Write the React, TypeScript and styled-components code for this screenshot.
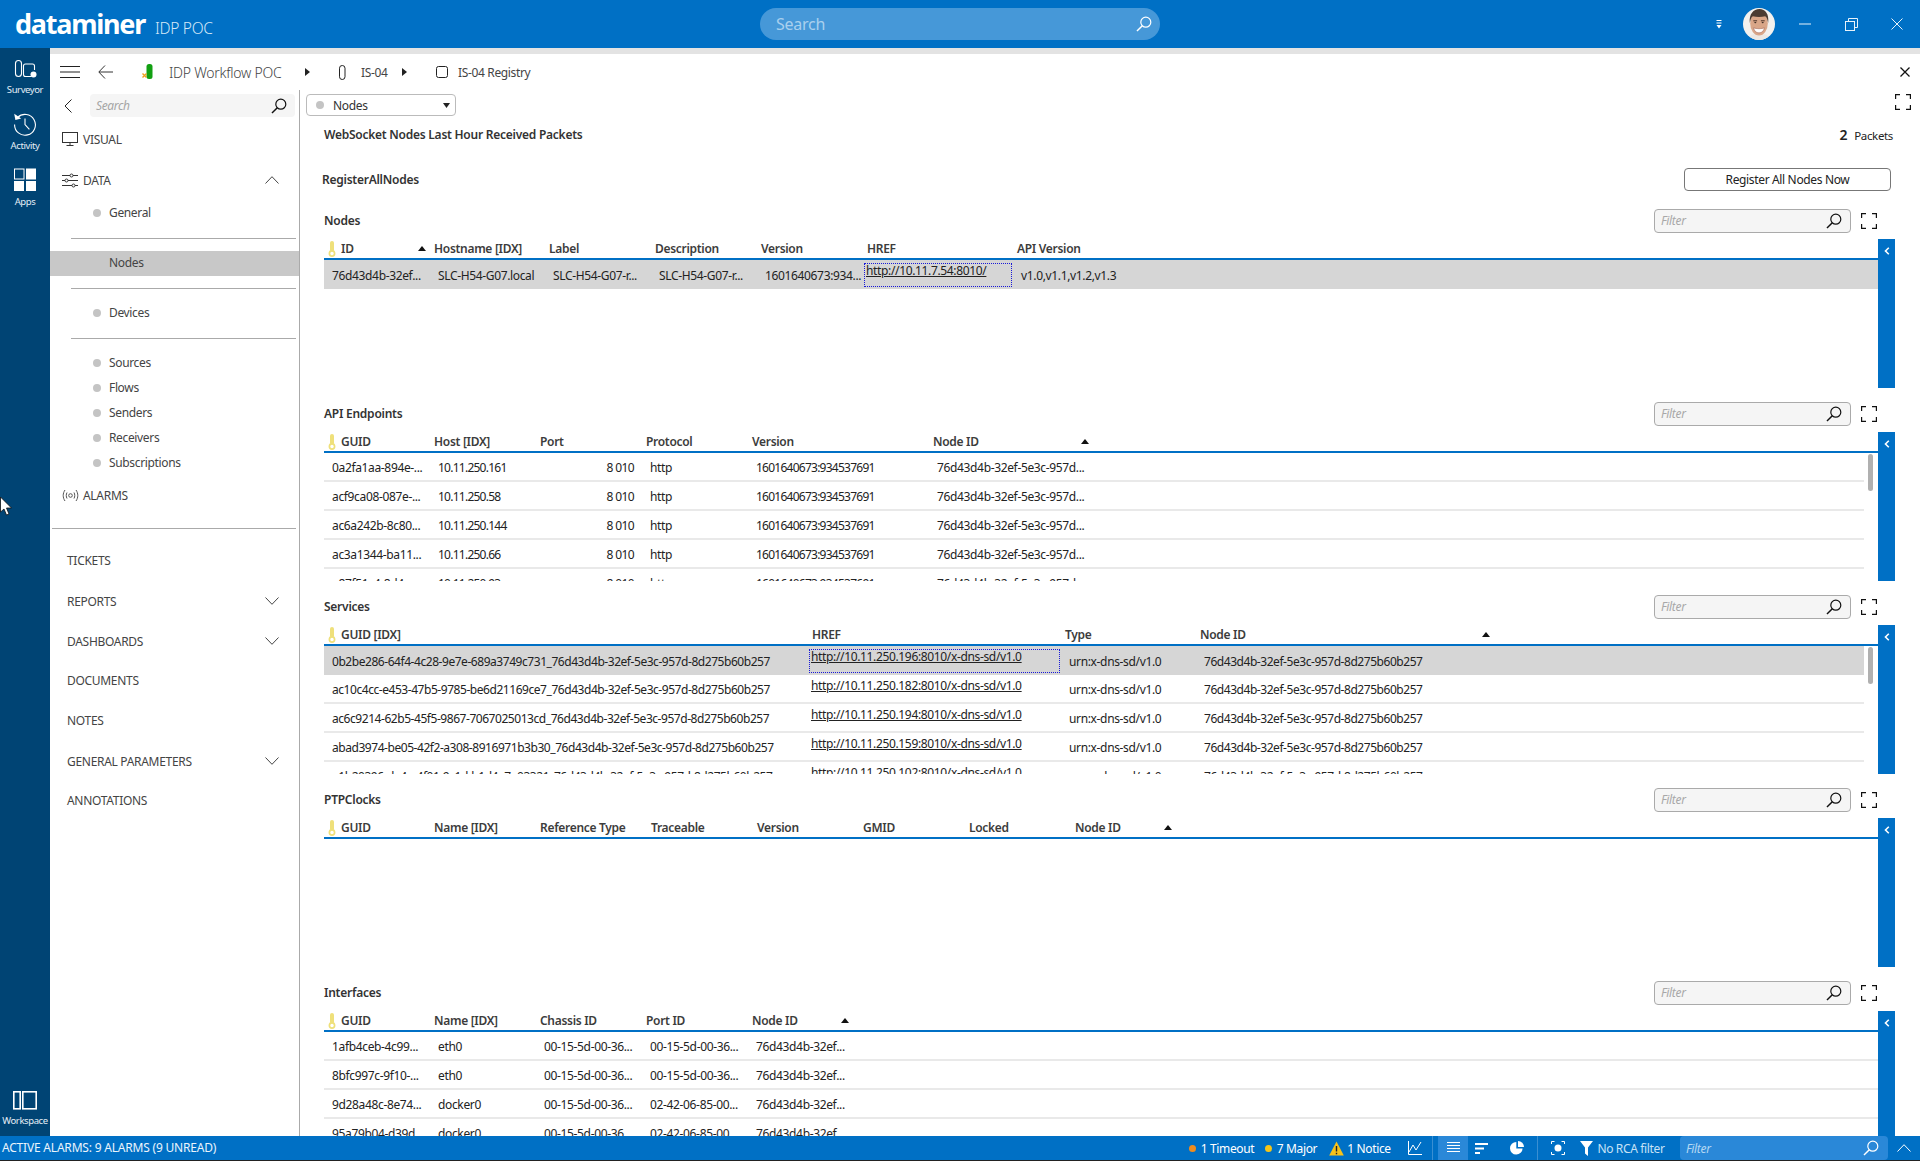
import React from "react";
import styled, { createGlobalStyle } from "styled-components";

const FONT = `"Noto Sans", "Open Sans", "DejaVu Sans", sans-serif`;
const BLUE = "#0070c5";

const Global = createGlobalStyle`
  html, body { margin: 0; padding: 0; background: #fff; }
  * { box-sizing: border-box; }
  svg { flex: none; }
  body { font-family: ${FONT}; font-size: 12px; letter-spacing: -0.35px; color: #222; }
`;

const Page = styled.div`
  position: relative;
  width: 1920px;
  height: 1161px;
  overflow: hidden;
  display: flex;
  flex-direction: column;
  background: #fff;
`;

/* ---------- top bar ---------- */
const TopBar = styled.header`
  flex: none;
  height: 48px;
  background: ${BLUE};
  display: grid;
  grid-template-columns: 760px 400px 1fr;
  align-items: center;
  color: #fff;
`;
const Brand = styled.div`
  display: flex;
  align-items: baseline;
  padding-left: 15px;
`;
const Logo = styled.span`
  font-size: 27px;
  font-weight: 700;
  letter-spacing: -1.25px;
  line-height: 36px;
`;
const Tag = styled.span`
  font-size: 15.5px;
  font-weight: 300;
  letter-spacing: -0.3px;
  margin-left: 10px;
  color: #d5e8f7;
`;
const GlobalSearch = styled.div`
  height: 32px;
  border-radius: 16px;
  background: #4698d8;
  display: flex;
  align-items: center;
  justify-content: space-between;
  padding: 0 8px 0 16px;
  font-size: 16px;
  letter-spacing: -0.25px;
  color: #a9d0ee;
`;
const TopRight = styled.div`
  display: flex;
  align-items: center;
  justify-content: flex-end;
  height: 48px;
`;
const Avatar = styled.svg`
  width: 32px;
  height: 32px;
  margin: 0 7px 0 19px;
`;
const WinButton = styled.span`
  width: 46px;
  height: 48px;
  display: flex;
  align-items: center;
  justify-content: center;
`;

/* ---------- body ---------- */
const Body = styled.div`
  flex: 1;
  min-height: 0;
  display: flex;
`;
const Rail = styled.nav`
  flex: none;
  width: 50px;
  background: #004474;
  display: flex;
  flex-direction: column;
  color: #e4eef6;
`;
const RailButton = styled.div<{ $bottom?: boolean }>`
  height: 55px;
  padding-top: 10px;
  display: flex;
  flex-direction: column;
  align-items: center;
  margin-top: ${(p) => (p.$bottom ? "auto" : "0")};
  margin-bottom: ${(p) => (p.$bottom ? "4px" : "0")};
`;
const RailLabel = styled.span`
  font-size: 9.5px;
  line-height: 14px;
  margin-top: 3px;
  letter-spacing: -0.4px;
`;
const Work = styled.div`
  flex: 1;
  min-width: 0;
  display: flex;
  flex-direction: column;
  border-top: 6px solid #e3e3e3;
`;
const CrumbBar = styled.div`
  flex: none;
  height: 36px;
  display: flex;
  align-items: center;
  padding-right: 10px;
`;
const CrumbSlot = styled.span<{ $left: number; $width: number }>`
  flex: none;
  margin-left: ${(p) => p.$left}px;
  width: ${(p) => p.$width}px;
  display: flex;
  align-items: center;
  white-space: nowrap;
  color: #444;
`;
const CrumbTitle = styled(CrumbSlot)`
  font-size: 14px;
  font-weight: 300;
  letter-spacing: -0.25px;
`;
const CrumbClose = styled.span`
  margin-left: auto;
  display: flex;
`;
const Columns = styled.div`
  flex: 1;
  min-height: 0;
  display: flex;
`;

/* ---------- side navigation ---------- */
const NavPanel = styled.aside`
  flex: none;
  width: 250px;
  border-right: 1px solid #aaa;
  color: #444;
`;
const NavSearchRow = styled.div`
  height: 30px;
  display: flex;
  align-items: flex-start;
  padding-top: 4px;
`;
const NavBack = styled.span`
  width: 40px;
  height: 23px;
  display: flex;
  align-items: center;
  padding-left: 14px;
`;
const NavSearch = styled.div`
  width: 205px;
  height: 23px;
  border-radius: 4px;
  background: #f5f5f5;
  display: flex;
  align-items: center;
  justify-content: space-between;
  padding: 0 8px 0 6px;
  font-style: italic;
  color: #a5a5a5;
`;
const NavTop = styled.div<{ $gap?: number }>`
  height: 40px;
  margin-top: ${(p) => p.$gap ?? 0}px;
  display: flex;
  align-items: center;
  padding: 0 20px 2px 12px;
  font-size: 12px;
  letter-spacing: -0.3px;
`;
const NavIcon = styled.span`
  width: 21px;
  display: flex;
  flex: none;
`;
const NavChevron = styled.span`
  margin-left: auto;
  display: flex;
`;
const NavSub = styled.div<{ $active?: boolean }>`
  height: 25px;
  display: flex;
  align-items: center;
  padding: 0 0 2px 43px;
  background: ${(p) => (p.$active ? "#c8c8c8" : "transparent")};
`;
const NavDot = styled.span<{ $hidden?: boolean }>`
  width: 8px;
  height: 8px;
  border-radius: 50%;
  background: ${(p) => (p.$hidden ? "transparent" : "#c4c4c4")};
  margin-right: 8px;
`;
const NavRule = styled.div<{ $left: number }>`
  height: 1px;
  margin: 12px 3px 12px ${(p) => p.$left}px;
  background: #aaa;
`;
const NavPlain = styled(NavTop)`
  padding-left: 17px;
`;

/* ---------- main ---------- */
const Main = styled.main`
  flex: 1;
  min-width: 0;
  overflow: hidden;
`;
const TopRow = styled.div`
  height: 33px;
  padding: 4px 9px 0 6px;
  display: flex;
  justify-content: space-between;
  align-items: flex-start;
`;
const Dropdown = styled.div`
  width: 150px;
  height: 22px;
  border: 1px solid #bbb;
  border-radius: 4px;
  display: flex;
  align-items: center;
  padding: 0 5px 0 9px;
  color: #333;
`;
const DropText = styled.span`
  margin-left: 1px;
  flex: 1;
`;
const TitleRow = styled.div`
  height: 24px;
  padding: 0 27px 2px 24px;
  display: flex;
  justify-content: space-between;
  align-items: center;
`;
const StrongTitle = styled.span`
  font-weight: 600;
  color: #333;
  letter-spacing: -0.25px;
`;
const Packets = styled.span`
  display: flex;
  align-items: baseline;
  gap: 7px;
  font-size: 11.5px;
  b { font-size: 14px; font-weight: 600; }
`;
const RegisterRow = styled.div`
  margin-top: 21px;
  height: 23px;
  padding: 0 29px 0 22px;
  display: flex;
  justify-content: space-between;
  align-items: center;
`;
const RegisterButton = styled.button`
  width: 207px;
  height: 23px;
  border: 1px solid #777;
  border-radius: 4px;
  background: #fff;
  font: inherit;
  letter-spacing: inherit;
  color: #222;
  padding: 0;
`;
const Sections = styled.div`
  margin-top: 17px;
`;
const Section = styled.section`
  height: 193px;
  padding: 0 25px 0 24px;
`;
const SectionHead = styled.div`
  height: 25px;
  margin-bottom: 6px;
  display: flex;
  align-items: center;
  padding-right: 18px;
`;
const FilterBox = styled.div`
  margin-left: auto;
  width: 197px;
  height: 24px;
  border: 1px solid #aaa;
  border-radius: 4px;
  background: #f5f5f5;
  display: flex;
  align-items: center;
  justify-content: space-between;
  padding: 0 8px 0 6px;
  font-style: italic;
  color: #a8a8a8;
`;
const ExpandIcon = styled.span`
  margin-left: 10px;
  display: flex;
`;
const TableWrap = styled.div`
  height: 149px;
  display: flex;
`;
const TableMain = styled.div`
  flex: 1;
  min-width: 0;
  display: flex;
  flex-direction: column;
`;
const SideTab = styled.div`
  flex: none;
  width: 17px;
  background: ${BLUE};
  display: flex;
  justify-content: center;
  padding-top: 8px;
`;
const HeadRow = styled.div<{ $cols: string }>`
  flex: none;
  height: 21px;
  display: grid;
  grid-template-columns: ${(p) => p.$cols};
  border-bottom: 2px solid ${BLUE};
  font-weight: 600;
  color: #3c3c3c;
  letter-spacing: -0.3px;
`;
const HeadCell = styled.div`
  display: flex;
  align-items: center;
  white-space: nowrap;
  padding-right: 8px;
`;
const KeyIcon = styled.svg`
  flex: none;
  margin: 0 5px 0 4px;
`;
const SortMark = styled.span`
  margin-left: auto;
  width: 0;
  height: 0;
  border-left: 4.5px solid transparent;
  border-right: 4.5px solid transparent;
  border-bottom: 5px solid #111;
`;
const BodyArea = styled.div`
  flex: 1;
  min-height: 0;
  display: flex;
  overflow: hidden;
`;
const RowList = styled.div`
  flex: 1;
  min-width: 0;
`;
const ScrollTrack = styled.div`
  flex: none;
  width: 14px;
  padding: 1px 5px 0 4px;
`;
const ScrollThumb = styled.div`
  height: 37px;
  border-radius: 3px;
  background: #b0b0b0;
`;
const Row = styled.div<{ $cols: string; $selected?: boolean; $plain?: boolean }>`
  height: 29px;
  display: grid;
  grid-template-columns: ${(p) => p.$cols};
  background: ${(p) => (p.$selected ? "#d6d6d6" : "#fff")};
  border-bottom: ${(p) => (p.$plain ? "none" : "2px solid #e9e9e9")};
`;
const Cell = styled.div`
  display: flex;
  align-items: center;
  white-space: nowrap;
  padding: 2px 0 0 4px;
  color: #222;
  &:first-child { padding-left: 8px; }
`;
const Digits = styled.span`
  letter-spacing: -0.75px;
`;
const Dense = styled.span`
  letter-spacing: -0.45px;
`;
const LinkCell = styled.div<{ $focus?: boolean }>`
  margin: 3px 5px 2px -3px;
  padding: 0 0 0 2px;
  white-space: nowrap;
  line-height: 16px;
  outline: ${(p) => (p.$focus ? "1px dotted #1a1ad8" : "none")};
  outline-offset: -1px;
  a { color: #222; text-decoration: underline; }
`;
const PortValue = styled.span`
  width: 100%;
  text-align: right;
  padding-right: 12px;
  letter-spacing: -0.6px;
`;

/* ---------- status bar ---------- */
const StatusBar = styled.footer`
  flex: none;
  height: 25px;
  border-bottom: 1px solid #222;
  background: ${BLUE};
  color: #fff;
  display: flex;
  align-items: center;
  position: relative;
  z-index: 1;
`;
const AlarmText = styled.span`
  margin-left: 2px;
  padding-bottom: 2px;
  font-size: 12px;
  letter-spacing: -0.2px;
  margin-right: auto;
  color: #eaf4fc;
`;
const StatusSlot = styled.span<{ $left: number; $width: number; $dim?: boolean }>`
  flex: none;
  margin-left: ${(p) => p.$left}px;
  width: ${(p) => p.$width}px;
  display: flex;
  align-items: center;
  justify-content: center;
  white-space: nowrap;
  color: ${(p) => (p.$dim ? "#c8e2f6" : "#fff")};
`;
const StatusDot = styled.span<{ $color: string }>`
  width: 7px;
  height: 7px;
  border-radius: 50%;
  background: ${(p) => p.$color};
`;
const StatusDivider = styled.span<{ $left: number }>`
  flex: none;
  margin-left: ${(p) => p.$left}px;
  width: 1px;
  height: 24px;
  background: #3a8fd2;
`;
const ActiveView = styled.span`
  flex: none;
  margin-left: 5px;
  width: 30px;
  height: 24px;
  background: #2a88d8;
  display: flex;
  align-items: center;
  justify-content: center;
`;
const StatusFilter = styled.div`
  flex: none;
  margin-left: 17px;
  width: 208px;
  height: 24px;
  border-radius: 4px;
  background: #2a88d8;
  display: flex;
  align-items: center;
  justify-content: space-between;
  padding: 0 9px 0 6px;
  font-style: italic;
  color: #b5d8f3;
`;
const StatusChevron = styled.span`
  flex: none;
  width: 32px;
  display: flex;
  justify-content: center;
`;
const Pointer = styled.svg`
  position: absolute;
  left: 0;
  top: 497px;
  pointer-events: none;
`;

/* ---------- icons ---------- */
const Lens = ({ size = 16, color = "#111" }: { size?: number; color?: string }) => (
  <svg width={size} height={size} viewBox="0 0 16 16" fill="none" stroke={color} strokeWidth="1.2">
    <circle cx="9.8" cy="6.2" r="5" />
    <path d="M6.3 9.8 1 15" strokeWidth="1.5" />
  </svg>
);
const Corners = () => (
  <svg width="16" height="16" viewBox="0 0 16 16" fill="none" stroke="#111" strokeWidth="1.2">
    <path d="M.6 5V.6H5M11 .6h4.4V5M15.4 11v4.4H11M5 15.4H.6V11" />
  </svg>
);
const ChevronDown = () => (
  <svg width="14" height="8" viewBox="0 0 14 8" fill="none" stroke="#444" strokeWidth="1">
    <path d="M.5.5 7 7.3 13.5.5" />
  </svg>
);
const ChevronUp = ({ color = "#444" }: { color?: string }) => (
  <svg width="14" height="8" viewBox="0 0 14 8" fill="none" stroke={color} strokeWidth="1">
    <path d="M.5 7.5 7 .7l6.5 6.8" />
  </svg>
);
const RightCaret = () => (
  <svg width="5" height="8" viewBox="0 0 5 8"><path d="M0 0l5 4-5 4z" fill="#222" /></svg>
);
const Key = () => (
  <KeyIcon width="8" height="16" viewBox="0 0 8 16">
    <rect x="2" y="0" width="4" height="11" rx="2" fill="#efe07a" />
    <circle cx="4" cy="12.5" r="2.6" fill="#fff" stroke="#efe07a" strokeWidth="1.7" />
  </KeyIcon>
);

const NODE = "76d43d4b-32ef-5e3c-957d...";
const VER = "1601640673:934537691";
const FULL = "_76d43d4b-32ef-5e3c-957d-8d275b60b257";
const FULLN = "76d43d4b-32ef-5e3c-957d-8d275b60b257";

type Col = { label: string; sorted?: boolean; key?: boolean };
type TableDef = {
  title: string;
  cols: string;
  head: Col[];
  scroll?: boolean;
  rows: { cells: React.ReactNode[]; selected?: boolean }[];
};

const Link = ({ href, focus }: { href: string; focus?: boolean }) => (
  <LinkCell $focus={focus}><a>{href}</a></LinkCell>
);

const api = (g: string, h: string) => ({
  cells: [
    g,
    <Digits key="h">{h}</Digits>,
    <PortValue key="p">8 010</PortValue>,
    "http",
    <Digits key="v">{VER}</Digits>,
    NODE,
  ],
});
const svc = (g: string, h: string, selected?: boolean) => ({
  selected,
  cells: [
    <Dense key="g">{g + FULL}</Dense>,
    <Link key="h" href={h} focus={selected} />,
    "urn:x-dns-sd/v1.0",
    <Dense key="n">{FULLN}</Dense>,
  ],
});
const ifc = (g: string, n: string, p: string) => ({
  cells: [g, n, "00-15-5d-00-36...", p, "76d43d4b-32ef..."],
});

const tables: TableDef[] = [
  {
    title: "Nodes",
    cols: "110px 115px 106px 106px 106px 150px 1fr",
    head: [
      { label: "ID", key: true, sorted: true },
      { label: "Hostname [IDX]" },
      { label: "Label" },
      { label: "Description" },
      { label: "Version" },
      { label: "HREF" },
      { label: "API Version" },
    ],
    rows: [
      {
        selected: true,
        cells: [
          "76d43d4b-32ef...",
          "SLC-H54-G07.local",
          "SLC-H54-G07-r...",
          "SLC-H54-G07-r...",
          "1601640673:934...",
          <Link key="h" href="http://10.11.7.54:8010/" focus />,
          "v1.0,v1.1,v1.2,v1.3",
        ],
      },
    ],
  },
  {
    title: "API Endpoints",
    scroll: true,
    cols: "110px 106px 106px 106px 181px 164px 1fr",
    head: [
      { label: "GUID", key: true },
      { label: "Host [IDX]" },
      { label: "Port" },
      { label: "Protocol" },
      { label: "Version" },
      { label: "Node ID", sorted: true },
      { label: "" },
    ],
    rows: [
      api("0a2fa1aa-894e-...", "10.11.250.161"),
      api("acf9ca08-087e-...", "10.11.250.58"),
      api("ac6a242b-8c80...", "10.11.250.144"),
      api("ac3a1344-ba11...", "10.11.250.66"),
      api("a87f51c4-8d4...", "10.11.250.93"),
    ],
  },
  {
    title: "Services",
    scroll: true,
    cols: "488px 253px 135px 298px 1fr",
    head: [
      { label: "GUID [IDX]", key: true },
      { label: "HREF" },
      { label: "Type" },
      { label: "Node ID", sorted: true },
      { label: "" },
    ],
    rows: [
      svc("0b2be286-64f4-4c28-9e7e-689a3749c731", "http://10.11.250.196:8010/x-dns-sd/v1.0", true),
      svc("ac10c4cc-e453-47b5-9785-be6d21169ce7", "http://10.11.250.182:8010/x-dns-sd/v1.0"),
      svc("ac6c9214-62b5-45f5-9867-7067025013cd", "http://10.11.250.194:8010/x-dns-sd/v1.0"),
      svc("abad3974-be05-42f2-a308-8916971b3b30", "http://10.11.250.159:8010/x-dns-sd/v1.0"),
      svc("a1b20396-da4e-4f01-9c1d-b1d4a7e03321", "http://10.11.250.102:8010/x-dns-sd/v1.0"),
    ],
  },
  {
    title: "PTPClocks",
    cols: "110px 106px 111px 106px 106px 106px 106px 105px 1fr",
    head: [
      { label: "GUID", key: true },
      { label: "Name [IDX]" },
      { label: "Reference Type" },
      { label: "Traceable" },
      { label: "Version" },
      { label: "GMID" },
      { label: "Locked" },
      { label: "Node ID", sorted: true },
      { label: "" },
    ],
    rows: [],
  },
  {
    title: "Interfaces",
    cols: "110px 106px 106px 106px 105px 1fr",
    head: [
      { label: "GUID", key: true },
      { label: "Name [IDX]" },
      { label: "Chassis ID" },
      { label: "Port ID" },
      { label: "Node ID", sorted: true },
      { label: "" },
    ],
    rows: [
      ifc("1afb4ceb-4c99...", "eth0", "00-15-5d-00-36..."),
      ifc("8bfc997c-9f10-...", "eth0", "00-15-5d-00-36..."),
      ifc("9d28a48c-8e74...", "docker0", "02-42-06-85-00..."),
      ifc("95a79b04-d39d...", "docker0", "02-42-06-85-00..."),
    ],
  },
];

const DataTable = ({ t }: { t: TableDef }) => (
  <Section>
    <SectionHead>
      <StrongTitle>{t.title}</StrongTitle>
      <FilterBox>
        Filter
        <Lens />
      </FilterBox>
      <ExpandIcon><Corners /></ExpandIcon>
    </SectionHead>
    <TableWrap>
      <TableMain>
        <HeadRow $cols={t.cols}>
          {t.head.map((h, i) => (
            <HeadCell key={i}>
              {h.key && <Key />}
              {h.label}
              {h.sorted && <SortMark />}
            </HeadCell>
          ))}
        </HeadRow>
        <BodyArea>
          <RowList>
            {t.rows.map((r, i) => (
              <Row key={i} $cols={t.cols} $selected={r.selected} $plain={r.selected}>
                {r.cells.map((c, j) =>
                  typeof c === "string" ? <Cell key={j}>{c}</Cell> : c && (c as any).type === Link ? (
                    <React.Fragment key={j}>{c}</React.Fragment>
                  ) : (
                    <Cell key={j}>{c}</Cell>
                  )
                )}
              </Row>
            ))}
          </RowList>
          {t.scroll && (
            <ScrollTrack><ScrollThumb /></ScrollTrack>
          )}
        </BodyArea>
      </TableMain>
      <SideTab>
        <svg width="6" height="8" viewBox="0 0 6 8" fill="none" stroke="#fff" strokeWidth="1.6">
          <path d="M4.8.8 1.5 4l3.3 3.2" />
        </svg>
      </SideTab>
    </TableWrap>
  </Section>
);

const App = () => (
  <Page>
    <Global />
    <TopBar>
      <Brand>
        <Logo>dataminer</Logo>
        <Tag>IDP POC</Tag>
      </Brand>
      <GlobalSearch>
        Search
        <Lens color="#fff" size={16} />
      </GlobalSearch>
      <TopRight>
        <svg width="10" height="9" viewBox="0 0 10 9">
          <path d="M2.500.5h5M2.500 3h5" stroke="#fff" strokeWidth="1" />
          <path d="M2.500 5h5L5 8.500z" fill="#fff" />
        </svg>
        <Avatar viewBox="0 0 32 32">
          <defs>
            <clipPath id="face"><circle cx="16" cy="16" r="16" /></clipPath>
          </defs>
          <g clipPath="url(#face)">
            <rect width="32" height="32" fill="#f3f1ee" />
            <path d="M5 32c1-5 6-7 11-7s10 2 11 7z" fill="#ece8e3" />
            <ellipse cx="16" cy="15.500" rx="8.800" ry="12" fill="#d9a688" />
            <path d="M6.800 15C5.800 6 10.500 1 16.400 1 22.500 1 26.200 6 25.200 15c-.7-3.200-1.400-5.800-3-6.800-3.800 1-8.600 1-12.400 0-1.600 1-2.300 3.600-3 6.800z" fill="#4a3b32" />
            <path d="M10.300 12.800h3.800M17.900 12.800h3.800" stroke="#4a3428" strokeWidth="1" />
            <ellipse cx="12.300" cy="14.600" rx="1.100" ry=".7" fill="#3a2b22" />
            <ellipse cx="19.700" cy="14.600" rx="1.100" ry=".7" fill="#3a2b22" />
            <path d="M10.500 19.800c3 1.200 8 1.200 11 0-1 3.800-3.200 5-5.500 5s-4.500-1.200-5.500-5z" fill="#fff" stroke="#a86a58" strokeWidth=".6" />
          </g>
        </Avatar>
        <WinButton>
          <svg width="12" height="2" viewBox="0 0 12 2"><path d="M0 1h12" stroke="#e8f2fa" /></svg>
        </WinButton>
        <WinButton>
          <svg width="13" height="13" viewBox="0 0 13 13" fill="none" stroke="#e8f2fa">
            <rect x=".5" y="3.500" width="9" height="9" />
            <path d="M3.500 3.500v-3h9v9h-3" />
          </svg>
        </WinButton>
        <WinButton>
          <svg width="12" height="12" viewBox="0 0 12 12" stroke="#e8f2fa"><path d="M.5.5l11 11M11.500.5l-11 11" /></svg>
        </WinButton>
      </TopRight>
    </TopBar>

    <Body>
      <Rail>
        <RailButton>
          <svg width="24" height="22" viewBox="0 0 24 22" fill="none" stroke="#fff" strokeWidth="1.1">
            <rect x="2.500" y="2.500" width="6" height="16" rx="3" />
            <path d="M21.500 12V8a2 2 0 0 0-2-2h-7a2 2 0 0 0-2 2v8.500a2 2 0 0 0 2 2h6" />
            <circle cx="20.500" cy="16.500" r="3" fill="#fff" stroke="none" />
          </svg>
          <RailLabel>Surveyor</RailLabel>
        </RailButton>
        <RailButton>
          <svg width="24" height="23" viewBox="0 0 24 23" fill="none" stroke="#fff" strokeWidth="1.1">
            <path d="M4.600 4.500A10.400 10.400 0 1 1 1.600 11.500" />
            <path d="M1.200 .8l1.200 6.200 5.800-1.400z" fill="#fff" stroke="none" />
            <path d="M12 5.500V11.500l4.400 4.800" />
          </svg>
          <RailLabel>Activity</RailLabel>
        </RailButton>
        <RailButton>
          <svg width="24" height="24" viewBox="0 0 24 24" fill="#fff">
            <rect x="1.500" y="1" width="9.500" height="10" fill="none" stroke="#fff" strokeWidth="1" />
            <rect x="13" y=".5" width="10" height="11" />
            <rect x="1" y="13" width="10" height="10" />
            <rect x="13" y="13" width="10" height="10" />
          </svg>
          <RailLabel>Apps</RailLabel>
        </RailButton>
        <RailButton $bottom>
          <svg width="26" height="24" viewBox="0 0 26 24" fill="none" stroke="#fff" strokeWidth="1.6">
            <rect x="1.800" y="4.800" width="6.400" height="17" />
            <rect x="10.800" y="4.800" width="13.400" height="17" />
          </svg>
          <RailLabel>Workspace</RailLabel>
        </RailButton>
      </Rail>

      <Work>
        <CrumbBar>
          <CrumbSlot $left={10} $width={20}>
            <svg width="20" height="12" viewBox="0 0 20 12" stroke="#222"><path d="M0 .5h20M0 6h20M0 11.500h20" /></svg>
          </CrumbSlot>
          <CrumbSlot $left={18} $width={15}>
            <svg width="15" height="14" viewBox="0 0 15 14" fill="none" stroke="#333"><path d="M7 .5.800 7 7 13.500M1 7h14" /></svg>
          </CrumbSlot>
          <CrumbSlot $left={29} $width={11}>
            <svg width="11" height="16" viewBox="0 0 11 16">
              <rect x="4.500" y="0" width="6" height="15" rx="2.500" fill="#12a012" />
              <path d="M.5 9.500l4 4M4.500 9.500l-4 4" stroke="#f0a020" strokeWidth="1.400" />
            </svg>
          </CrumbSlot>
          <CrumbTitle $left={16} $width={114}>IDP Workflow POC</CrumbTitle>
          <CrumbSlot $left={22} $width={6}><RightCaret /></CrumbSlot>
          <CrumbSlot $left={28} $width={6}>
            <svg width="7" height="15" viewBox="0 0 7 15" fill="none" stroke="#222"><rect x=".5" y=".5" width="5.500" height="14" rx="2.700" /></svg>
          </CrumbSlot>
          <CrumbSlot $left={16} $width={28}>IS-04</CrumbSlot>
          <CrumbSlot $left={13} $width={6}><RightCaret /></CrumbSlot>
          <CrumbSlot $left={28} $width={12}>
            <svg width="12" height="12" viewBox="0 0 12 12" fill="none" stroke="#222"><rect x=".5" y=".5" width="11" height="11" rx="2" /></svg>
          </CrumbSlot>
          <CrumbSlot $left={10} $width={80}>IS-04 Registry</CrumbSlot>
          <CrumbClose>
            <svg width="10" height="10" viewBox="0 0 10 10" stroke="#111" strokeWidth="1.300"><path d="M.5.5l9 9M9.500.5l-9 9" /></svg>
          </CrumbClose>
        </CrumbBar>

        <Columns>
          <NavPanel>
            <NavSearchRow>
              <NavBack>
                <svg width="8" height="14" viewBox="0 0 8 14" fill="none" stroke="#222"><path d="M7.500.5 1 7l6.500 6.500" /></svg>
              </NavBack>
              <NavSearch>Search<Lens /></NavSearch>
            </NavSearchRow>
            <NavTop>
              <NavIcon>
                <svg width="16" height="14" viewBox="0 0 16 14" fill="none" stroke="#333">
                  <rect x=".5" y=".5" width="15" height="10" />
                  <path d="M8 10.500V13M4.500 13.500h7" />
                </svg>
              </NavIcon>
              VISUAL
            </NavTop>
            <NavTop $gap={1}>
              <NavIcon>
                <svg width="16" height="15" viewBox="0 0 16 15" fill="none" stroke="#333">
                  <path d="M0 2.500h8M11 2.500h5M0 7.500h3M6 7.500h10M0 12.500h10M13 12.500h3" />
                  <circle cx="9.500" cy="2.500" r="1.500" />
                  <circle cx="4.500" cy="7.500" r="1.500" />
                  <circle cx="11.500" cy="12.500" r="1.500" />
                </svg>
              </NavIcon>
              DATA
              <NavChevron><ChevronUp /></NavChevron>
            </NavTop>
            <NavSub><NavDot />General</NavSub>
            <NavRule $left={21} />
            <NavSub $active><NavDot $hidden />Nodes</NavSub>
            <NavRule $left={21} />
            <NavSub><NavDot />Devices</NavSub>
            <NavRule $left={21} />
            <NavSub><NavDot />Sources</NavSub>
            <NavSub><NavDot />Flows</NavSub>
            <NavSub><NavDot />Senders</NavSub>
            <NavSub><NavDot />Receivers</NavSub>
            <NavSub><NavDot />Subscriptions</NavSub>
            <NavTop>
              <NavIcon>
                <svg width="17" height="13" viewBox="0 0 17 13" fill="none" stroke="#555">
                  <path d="M3 1C.6 4.500.6 8.500 3 12M14 1c2.400 3.500 2.400 7.500 0 11M5 3.500c-1 2-1 4 0 6M12 3.500c1 2 1 4 0 6" />
                  <circle cx="8.500" cy="6.500" r="1.800" />
                </svg>
              </NavIcon>
              ALARMS
            </NavTop>
            <NavRule $left={2} />
            <NavPlain>TICKETS</NavPlain>
            <NavPlain $gap={1}>REPORTS<NavChevron><ChevronDown /></NavChevron></NavPlain>
            <NavPlain>DASHBOARDS<NavChevron><ChevronDown /></NavChevron></NavPlain>
            <NavPlain $gap={-1}>DOCUMENTS</NavPlain>
            <NavPlain>NOTES</NavPlain>
            <NavPlain $gap={1}>GENERAL PARAMETERS<NavChevron><ChevronDown /></NavChevron></NavPlain>
            <NavPlain $gap={-1}>ANNOTATIONS</NavPlain>
          </NavPanel>

          <Main>
            <TopRow>
              <Dropdown>
                <NavDot />
                <DropText>Nodes</DropText>
                <svg width="7" height="5" viewBox="0 0 7 5"><path d="M0 0h7L3.500 5z" fill="#222" /></svg>
              </Dropdown>
              <Corners />
            </TopRow>
            <TitleRow>
              <StrongTitle>WebSocket Nodes Last Hour Received Packets</StrongTitle>
              <Packets><b>2</b> Packets</Packets>
            </TitleRow>
            <RegisterRow>
              <StrongTitle>RegisterAllNodes</StrongTitle>
              <RegisterButton>Register All Nodes Now</RegisterButton>
            </RegisterRow>
            <Sections>
              {tables.map((t) => (
                <DataTable key={t.title} t={t} />
              ))}
            </Sections>
          </Main>
        </Columns>
      </Work>
    </Body>

    <StatusBar>
      <AlarmText>ACTIVE ALARMS: 9 ALARMS (9 UNREAD)</AlarmText>
      <StatusSlot $left={0} $width={7}><StatusDot $color="#f08c1e" /></StatusSlot>
      <StatusSlot $left={5} $width={53}>1 Timeout</StatusSlot>
      <StatusSlot $left={11} $width={7}><StatusDot $color="#f5c518" /></StatusSlot>
      <StatusSlot $left={5} $width={40}>7 Major</StatusSlot>
      <StatusSlot $left={12} $width={15}>
        <svg width="15" height="15" viewBox="0 0 15 15">
          <path d="M7.500.5 14.800 14.500H.2z" fill="#f7c21a" />
          <path d="M7.500 5v5.500M7.500 11.800v1.500" stroke="#222" strokeWidth="1.400" />
        </svg>
      </StatusSlot>
      <StatusSlot $left={3} $width={44}>1 Notice</StatusSlot>
      <StatusSlot $left={17} $width={14}>
        <svg width="14" height="14" viewBox="0 0 14 14" fill="none" stroke="#fff"><path d="M.5 0v13.500H14M1 11l4-7 3 5 5-8" /></svg>
      </StatusSlot>
      <StatusDivider $left={10} />
      <ActiveView>
        <svg width="13" height="12" viewBox="0 0 13 12" stroke="#fff"><path d="M0 .5h13M0 3.500h13M0 6.500h13M0 9.500h13" /></svg>
      </ActiveView>
      <StatusSlot $left={6} $width={14}>
        <svg width="13" height="11" viewBox="0 0 13 11" stroke="#fff" strokeWidth="2"><path d="M0 1h13M0 5.500h9M0 10h5" /></svg>
      </StatusSlot>
      <StatusSlot $left={22} $width={14}>
        <svg width="14" height="14" viewBox="0 0 14 14" fill="#fff"><path d="M6.300 1A6.300 6.300 0 1 0 12.600 7.500H6.300z" /><path d="M8 0v6h6a6 6 0 0 0-6-6z" /></svg>
      </StatusSlot>
      <StatusDivider $left={13} />
      <StatusSlot $left={13} $width={14}>
        <svg width="14" height="16" viewBox="0 0 14 16" fill="none" stroke="#fff">
          <path d="M.5 4V1.500h3M10.500 1.500h3V4M13.500 12v2.500h-3M3.500 14.500h-3V12" />
          <circle cx="7" cy="8" r="3.500" fill="#fff" stroke="none" />
        </svg>
      </StatusSlot>
      <StatusSlot $left={14} $width={14}>
        <svg width="13" height="15" viewBox="0 0 13 15"><path d="M0 0h13L8 6.500V15L5 12.500V6.500z" fill="#fff" /></svg>
      </StatusSlot>
      <StatusSlot $left={6} $width={64} $dim>No RCA filter</StatusSlot>
      <StatusFilter>Filter<Lens color="#fff" /></StatusFilter>
      <StatusChevron><ChevronUp color="#fff" /></StatusChevron>
    </StatusBar>

    <Pointer width="12" height="19" viewBox="0 0 12 19">
      <path d="M.5 0v15l3.500-3 2.500 6 2.500-1-2.500-6h5z" fill="#fff" stroke="#111" strokeWidth=".8" />
    </Pointer>
  </Page>
);

export default App;
